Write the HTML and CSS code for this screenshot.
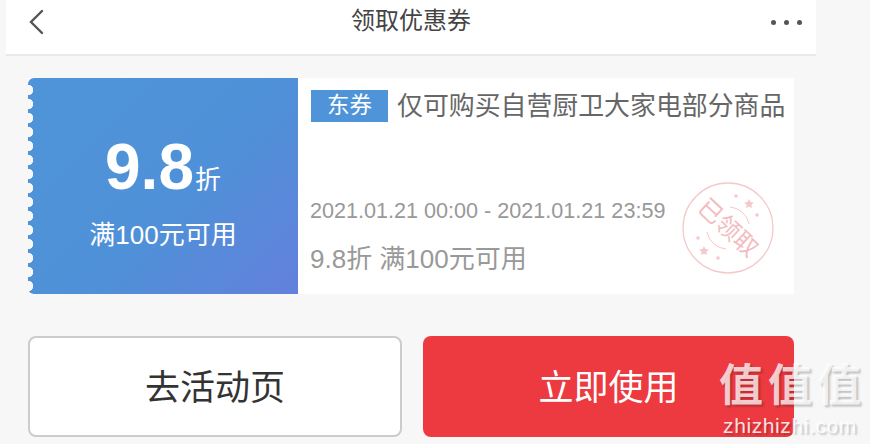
FILE: index.html
```html
<!DOCTYPE html>
<html lang="zh-CN">
<head>
    <meta charset="UTF-8">
    <meta name="viewport" content="width=device-width, initial-scale=1.0">
    <title>领取优惠券</title>
    <link rel="stylesheet" href="styles.css">
</head>
<body>
    <div class="page">
        <header class="topbar">
            <svg class="back" width="16" height="26" viewBox="0 0 16 26"><path d="M14 2 L3 13 L14 24" fill="none" stroke="#555" stroke-width="2.4" stroke-linecap="round"/></svg>
            <h1>领取优惠券</h1>
            <div class="more"><i></i><i></i><i></i></div>
        </header>

        <div class="coupon">
            <div class="coupon-left">
                <div class="rate"><strong>9.8</strong><span>折</span></div>
                <div class="limit">满100元可用</div>
            </div>
            <div class="coupon-right">
                <div class="title"><span class="tag">东券</span><span>仅可购买自营厨卫大家电部分商品</span></div>
                <div class="date">2021.01.21 00:00 - 2021.01.21 23:59</div>
                <div class="desc">9.8折 满100元可用</div>
                <svg class="stamp" width="92" height="92" viewBox="0 0 92 92">
                    <circle cx="46" cy="46" r="45" fill="none" stroke="#f5c9cc" stroke-width="1.3"/>
                    <path d="M48 25 A21 21 0 0 1 67 42" fill="none" stroke="#f5c9cc" stroke-width="1"/>
                    <path d="M25 50 A21 21 0 0 0 44 67" fill="none" stroke="#f5c9cc" stroke-width="1"/>
                    <text class="stamp-text" x="46" y="54" text-anchor="middle" transform="rotate(43 46 46)">已领取</text>
                    <circle cx="54" cy="14" r="1.800" fill="#f5c9cc"/>
                    <path d="M67 17 l1.500 3 3.300 .4 -2.400 2.300 .6 3.300 -3 -1.600 -3 1.600 .6 -3.300 -2.400 -2.300 3.300 -.4z" fill="#f5c9cc"/>
                    <circle cx="75" cy="33" r="1.800" fill="#f5c9cc"/>
                    <circle cx="16" cy="56" r="1.800" fill="#f5c9cc"/>
                    <path d="M22 64 l1.500 3 3.300 .4 -2.400 2.300 .6 3.300 -3 -1.600 -3 1.600 .6 -3.300 -2.400 -2.300 3.300 -.4z" fill="#f5c9cc"/>
                    <circle cx="36" cy="76" r="1.800" fill="#f5c9cc"/>
                </svg>
            </div>
        </div>

        <div class="actions">
            <button class="btn btn-plain">去活动页</button>
            <button class="btn btn-red">立即使用</button>
        </div>
    </div>

    <div class="watermark">
        <div class="wm-chars"><span>值</span><span>值</span><span>值</span></div>
        <div class="wm-url">zhizhizhi.com</div>
    </div>
</body>
</html>
```

FILE: styles.css
```css
* {
    box-sizing: border-box;
}
html, body {
    height: 100%;
}
body {
    margin: 0;
    background: #f7f7f7;
    font-family: "Liberation Sans", "Noto Sans CJK SC", sans-serif;
    overflow: hidden;
}
.page {
    width: 816px;
}
.topbar {
    margin-left: 6px;
    height: 56px;
    background: #fff;
    border-bottom: 2px solid #e9e9e9;
    display: flex;
    align-items: center;
    justify-content: space-between;
    padding: 0 14px 10px 22px;
    position: relative;
}
.topbar h1 {
    margin: 0;
    font-size: 24px;
    font-weight: normal;
    color: #444;
    line-height: 42px;
    position: absolute;
    left: 0;
    right: 0;
    top: 0;
    text-align: center;
}
.back {
    display: block;
}
.more {
    display: flex;
    gap: 8px;
}
.more i {
    width: 5px;
    height: 5px;
    border-radius: 50%;
    background: #555;
}
.coupon {
    margin: 22px 22px 0 28px;
    height: 216px;
    display: flex;
    background: #fff;
}
.coupon-left {
    width: 270px;
    flex: none;
    border-radius: 6px 0 0 6px;
    background: linear-gradient(135deg, #4f94d8 0%, #4f91d8 55%, #6380dc 100%);
    color: #fff;
    display: flex;
    flex-direction: column;
    align-items: center;
    position: relative;
    padding-top: 52px;
}
.coupon-left::before {
    content: "";
    position: absolute;
    left: -5px;
    top: 5px;
    bottom: 0;
    width: 10px;
    background: radial-gradient(circle at 5px 7px, #f7f7f7 5px, transparent 5.5px) 0 0 / 10px 14px repeat-y;
}
.rate {
    line-height: 74px;
    height: 74px;
}
.rate strong {
    font-size: 64px;
}
.rate span {
    font-size: 26px;
    margin-left: 1px;
}
.limit {
    font-size: 26px;
    line-height: 36px;
    margin-top: 13px;
}
.coupon-right {
    flex: 1;
    position: relative;
    padding: 12px 0 0 12px;
    color: #999;
}
.title {
    display: flex;
    align-items: center;
    font-size: 25.9px;
    line-height: 32px;
    color: #666;
    white-space: nowrap;
}
.tag {
    width: 77px;
    height: 32px;
    margin-left: 1px;
    background: #4f94d8;
    color: #fff;
    font-size: 22.5px;
    text-align: center;
    margin-right: 9px;
}
.date {
    margin-top: 71px;
    font-size: 21.6px;
    line-height: 36px;
    white-space: nowrap;
}
.desc {
    margin-top: 12px;
    font-size: 26px;
    line-height: 36px;
}
.stamp {
    position: absolute;
    left: 384px;
    top: 104px;
}
.stamp-text {
    font-size: 24px;
    fill: #f3bcc0;
}
.actions {
    margin: 42px 22px 0 28px;
    display: flex;
    gap: 21px;
}
.btn {
    height: 101px;
    font-family: inherit;
    font-size: 35px;
    border-radius: 8px;
    padding: 0 0 5px;
}
.btn-plain {
    width: 374px;
    background: #fff;
    color: #333;
    border: 2px solid #ccc;
}
.btn-red {
    flex: 1;
    background: #ec3a40;
    color: #fff;
    border: none;
}
.watermark {
    position: absolute;
    left: 719px;
    top: 358px;
    width: 142px;
    color: rgba(255, 255, 255, 0.75);
    text-shadow: 2px 2px 2px rgba(0, 0, 0, 0.22);
    text-align: center;
}
.wm-chars {
    display: flex;
    justify-content: space-between;
    font-size: 44px;
    font-weight: bold;
    line-height: 56px;
}
.wm-url {
    font-size: 21px;
    line-height: 24px;
    letter-spacing: 0.6px;
    white-space: nowrap;
    color: rgba(255, 255, 255, 0.85);
}
```
